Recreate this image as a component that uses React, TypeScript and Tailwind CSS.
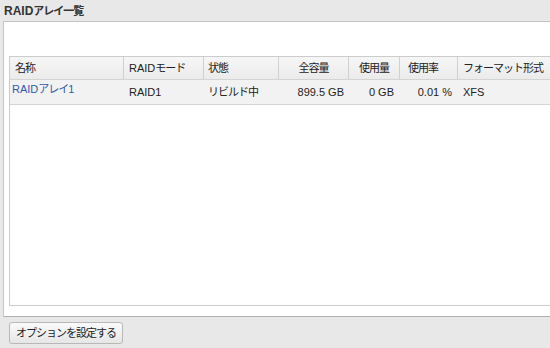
const font = { fontFamily: '"Liberation Sans", "Noto Sans CJK JP", sans-serif' };

// Japanese runs: the original face is narrower than Noto CJK, so tighten them
function J({ children }: { children: string }) {
  return <span className="tracking-[-1px]">{children}</span>;
}

const columns = [
  { label: <J>名称</J>, w: 'w-[114px]', head: 'pl-[5px] text-left' },
  { label: <>RAID<J>モード</J></>, w: 'w-[80px]', head: 'pl-[5px] text-left' },
  { label: <J>状態</J>, w: 'w-[75px]', head: 'pl-[4px] text-left' },
  { label: <J>全容量</J>, w: 'w-[70px]', head: 'text-center' },
  { label: <J>使用量</J>, w: 'w-[51px]', head: 'text-center' },
  { label: <J>使用率</J>, w: 'w-[58px]', head: 'pl-[8px] text-left' },
  { label: <J>フォーマット形式</J>, w: 'flex-1', head: 'pl-[5px] text-left' },
];

export default function App() {
  return (
    <div
      className="w-[550px] h-[348px] overflow-hidden bg-[#e8e8e8] text-[11px] text-[#222]"
      style={font}
    >
      <div className="h-[21px] pl-[4px] pt-[2px] text-[12px] font-bold text-[#333]">
        RAID<span className="text-[11px] tracking-[-1px]">アレイ一覧</span>
      </div>

      <div className="ml-[3px] h-[296px] border-t border-l border-b border-t-[#c4c4c4] border-l-[#c4c4c4] border-b-[#b0b0b0] bg-white pt-[34px] pl-[5px] pb-[10px] flex flex-col">
        <div className="flex-1 border border-r-0 border-[#cccccc] flex flex-col">
          <div className="flex h-[23px] bg-gradient-to-b from-[#f6f6f6] to-[#ebebeb] border-b border-[#d4d4d4]">
            {columns.map((c, i) => (
              <div
                key={i}
                className={`${c.w} ${c.head} whitespace-nowrap leading-[22px] ${i < columns.length - 1 ? 'border-r border-[#d0d0d0]' : ''}`}
              >
                {c.label}
              </div>
            ))}
          </div>
          <div className="flex h-[25px] bg-[#f2f2f2] border-b border-[#d4d4d4] leading-[17px] whitespace-nowrap">
            <div className="w-[114px] pl-[2px] pt-[1px] text-[#2f5ca8]">
              RAID<J>アレイ</J>1
            </div>
            <div className="w-[80px] pl-[5px] pt-[4px]">RAID1</div>
            <div className="w-[75px] pl-[4px] pt-[4px]">
              <J>リビルド中</J>
            </div>
            <div className="w-[70px] pr-[5px] pt-[4px] text-right">899.5 GB</div>
            <div className="w-[51px] pr-[6px] pt-[4px] text-right">0 GB</div>
            <div className="w-[58px] pr-[6px] pt-[4px] text-right">0.01 %</div>
            <div className="flex-1 pl-[5px] pt-[4px]">XFS</div>
          </div>
        </div>
      </div>

      <div className="pl-[9px] pt-[5px]">
        <button className="h-[22px] px-[6px] border border-[#b8b8b8] rounded-[3px] bg-gradient-to-b from-[#fafafa] to-[#e6e6e6] text-[11px] tracking-[-1px] text-[#222]">
          オプションを設定する
        </button>
      </div>
    </div>
  );
}
